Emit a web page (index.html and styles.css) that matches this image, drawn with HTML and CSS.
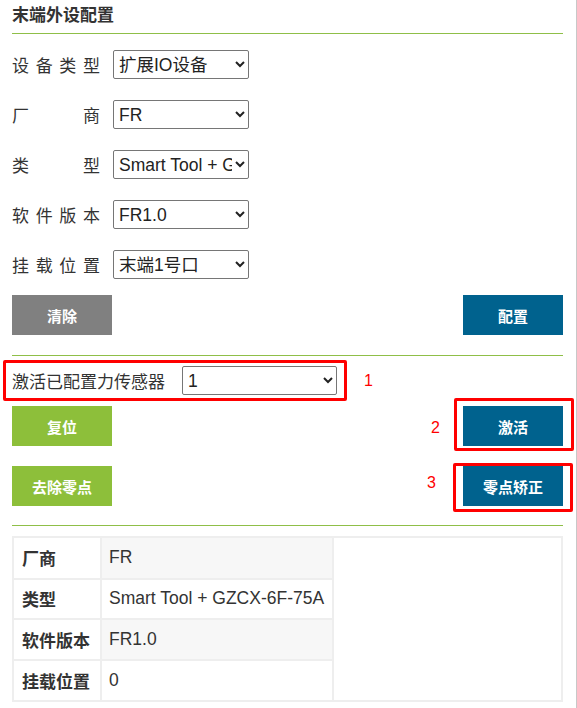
FILE: index.html
```html
<!DOCTYPE html>
<html lang="zh-CN">
<head>
<meta charset="utf-8">
<title>末端外设配置</title>
<link rel="stylesheet" href="styles.css">
</head>
<body>
<div class="page">
  <div class="panel">
    <h2 class="title">末端外设配置</h2>

    <div class="form">
      <div class="row">
        <label class="lbl">设备类型</label>
        <select class="sel"><option>扩展IO设备</option></select>
      </div>
      <div class="row">
        <label class="lbl">厂商</label>
        <select class="sel"><option>FR</option></select>
      </div>
      <div class="row">
        <label class="lbl">类型</label>
        <select class="sel"><option>Smart Tool + GZCX-6F-75A</option></select>
      </div>
      <div class="row">
        <label class="lbl">软件版本</label>
        <select class="sel"><option>FR1.0</option></select>
      </div>
      <div class="row">
        <label class="lbl">挂载位置</label>
        <select class="sel"><option>末端1号口</option></select>
      </div>
    </div>

    <div class="btn-row first">
      <button class="btn gray">清除</button>
      <button class="btn blue">配置</button>
    </div>

    <div class="divider top"></div>

    <div class="sensor-row">
      <div class="sensor-box">
        <span class="sensor-lbl">激活已配置力传感器</span>
        <select class="sel wide"><option>1</option></select>
      </div>
      <span class="note n1">1</span>
    </div>

    <div class="btn-row">
      <button class="btn green">复位</button>
      <div class="mark m2">
        <span class="note n2">2</span>
        <button class="btn blue">激活</button>
      </div>
    </div>

    <div class="btn-row gap20">
      <button class="btn green">去除零点</button>
      <div class="mark m3">
        <span class="note n3">3</span>
        <button class="btn blue">零点矫正</button>
      </div>
    </div>

    <div class="divider bottom"></div>

    <div class="info">
      <table class="info-table">
        <tr class="odd"><th>厂商</th><td>FR</td></tr>
        <tr><th>类型</th><td>Smart Tool + GZCX-6F-75A</td></tr>
        <tr class="odd"><th>软件版本</th><td>FR1.0</td></tr>
        <tr class="last"><th>挂载位置</th><td>0</td></tr>
      </table>
    </div>
  </div>
</div>
</body>
</html>
```

FILE: styles.css
```css
* { box-sizing: border-box; }

html, body {
  margin: 0;
  padding: 0;
  background: #fff;
}

body {
  font-family: "Liberation Sans", "Noto Sans CJK SC", Arial, sans-serif;
  font-size: 17px;
  color: #333;
}

.page {
  width: 577px;
  min-height: 708px;
  border-right: 1px solid #c8c8c8;
}

.panel {
  padding: 0 13px 0 12px;
}

.title {
  margin: 0;
  font-size: 17px;
  font-weight: bold;
  line-height: 31px;
  padding-bottom: 2px;
  border-bottom: 1px solid #8fbf48;
  color: #333;
}

.form {
  margin-top: 16px;
  display: flex;
  flex-direction: column;
  gap: 21px;
}

.row {
  display: flex;
  align-items: center;
  height: 29px;
}

.lbl {
  width: 88px;
  margin-right: 13px;
  text-align: justify;
  text-align-last: justify;
  font-size: 17px;
  color: #333;
  white-space: nowrap;
}

.sel {
  width: 136px;
  height: 29px;
  font-family: "Liberation Sans", "Noto Sans CJK SC", Arial, sans-serif;
  font-size: 17.5px;
  color: #222;
  border: 1px solid #767676;
  border-radius: 2px;
  background: #fff;
  padding: 0 0 0 1px;
}

.sel.wide {
  width: 155px;
}

.btn-row {
  display: flex;
  justify-content: space-between;
  align-items: center;
  margin-top: 5px;
}

.btn-row.first {
  margin-top: 16px;
}

.btn-row.gap20 {
  margin-top: 20px;
}

.btn {
  width: 100px;
  height: 40px;
  border: none;
  border-radius: 0;
  color: #fff;
  font-family: "Liberation Sans", "Noto Sans CJK SC", Arial, sans-serif;
  font-size: 15px;
  font-weight: bold;
  padding: 0;
}

.btn.gray { background: #808080; }
.btn.blue { background: #00628e; }
.btn.green { background: #8dbf3a; }

.divider {
  height: 1px;
  background: #8fbf48;
}

.divider.top { margin-top: 20px; }
.divider.bottom { margin-top: 19px; }

.sensor-row {
  display: flex;
  align-items: center;
  margin-top: 4px;
  margin-left: -9px;
}

.sensor-box {
  display: flex;
  align-items: center;
  width: 344px;
  height: 41px;
  border: 3px solid #ff0000;
  border-radius: 2px;
  padding-left: 6px;
}

.sensor-lbl {
  width: 157px;
  margin-right: 13px;
  font-size: 17px;
  color: #333;
  white-space: nowrap;
}

.note {
  color: #ff0000;
  font-size: 16px;
  font-family: "Liberation Sans", Arial, sans-serif;
}

.n1 {
  margin-left: 17px;
}

.mark {
  position: relative;
  display: flex;
}

.mark::after {
  content: "";
  position: absolute;
  border: 3px solid #ff0000;
  border-radius: 2px;
  pointer-events: none;
}

.m2::after {
  top: -8px;
  left: -9px;
  right: -11px;
  bottom: -5px;
}

.m3::after {
  top: -3px;
  left: -10px;
  right: -10px;
  bottom: -6px;
}

.mark .note {
  position: absolute;
  line-height: 16px;
}

.n2 {
  right: 123px;
  top: 14px;
}

.n3 {
  right: 127px;
  top: 9px;
}

.info {
  margin-top: 10px;
  border: 2px solid #eeeeee;
}

.info-table {
  border-collapse: collapse;
  border-right: 2px solid #eeeeee;
}

.info-table th,
.info-table td {
  height: 40.5px;
  padding: 0 8px;
  border-bottom: 2px solid #eeeeee;
  font-size: 17.5px;
  color: #333;
  text-align: left;
  white-space: nowrap;
}

.info-table th {
  font-weight: bold;
  font-size: 17px;
  background: #fff;
  border-right: 2px solid #eeeeee;
  padding: 0 8px 0 8px;
  width: 87px;
}

.info-table td {
  padding: 0 8px 0 7px;
}

.info-table tr.odd td {
  background: #f7f7f7;
}

.info-table tr.last th,
.info-table tr.last td {
  border-bottom: none;
}
```
